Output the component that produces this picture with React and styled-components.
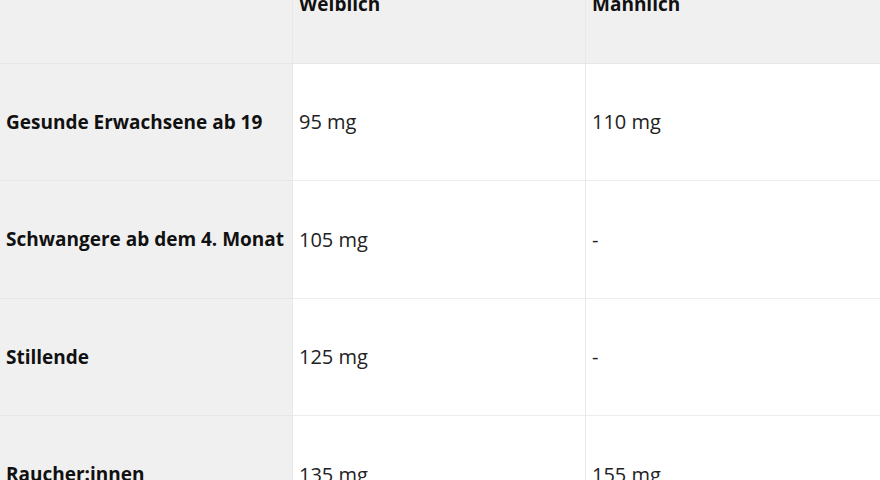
import React from 'react'
import { styled, createGlobalStyle } from 'styled-components'

const GlobalStyle = createGlobalStyle`
  html, body {
    margin: 0;
    padding: 0;
    background: #ffffff;
    overflow: hidden;
  }
  body {
    font-family: "Open Sans", "Noto Sans", sans-serif;
  }
`;

const rows = [
  { group: 'Gesunde Erwachsene ab 19', female: '95 mg', male: '110 mg' },
  { group: 'Schwangere ab dem 4. Monat', female: '105 mg', male: '-' },
  { group: 'Stillende', female: '125 mg', male: '-' },
  { group: 'Raucher:innen', female: '135 mg', male: '155 mg' },
];

export default function App() {
  return (
    <>
      <GlobalStyle />
      <Table>
        <Cell $head $first />
        <Cell $head>Weiblich</Cell>
        <Cell $head $last>Männlich</Cell>
        {rows.map((row) => (
          <React.Fragment key={row.group}>
            <Cell $first $bold>{row.group}</Cell>
            <Cell>{row.female}</Cell>
            <Cell $last>{row.male}</Cell>
          </React.Fragment>
        ))}
      </Table>
    </>
  )
}

const Table = styled.div`
  display: grid;
  grid-template-columns: 293px 293px 294px;
  grid-auto-rows: 117.5px;
  width: 880px;
  margin-top: -54px;
`;

const Cell = styled.div`
  display: flex;
  align-items: center;
  box-sizing: border-box;
  padding: 0 6px;
  background: ${(p) => (p.$head || p.$first ? '#f0f0f0' : '#ffffff')};
  border-bottom: 1px solid ${(p) => (p.$head || p.$first ? '#e6e6e6' : '#ececec')};
  border-right: ${(p) => (p.$last ? 'none' : '1px solid #e8e8e8')};
  color: ${(p) => (p.$head || p.$bold ? '#111111' : '#222222')};
  font-size: ${(p) => (p.$head || p.$bold ? '19px' : '20px')};
  font-weight: ${(p) => (p.$head || p.$bold ? 700 : 400)};
  white-space: nowrap;
`;
